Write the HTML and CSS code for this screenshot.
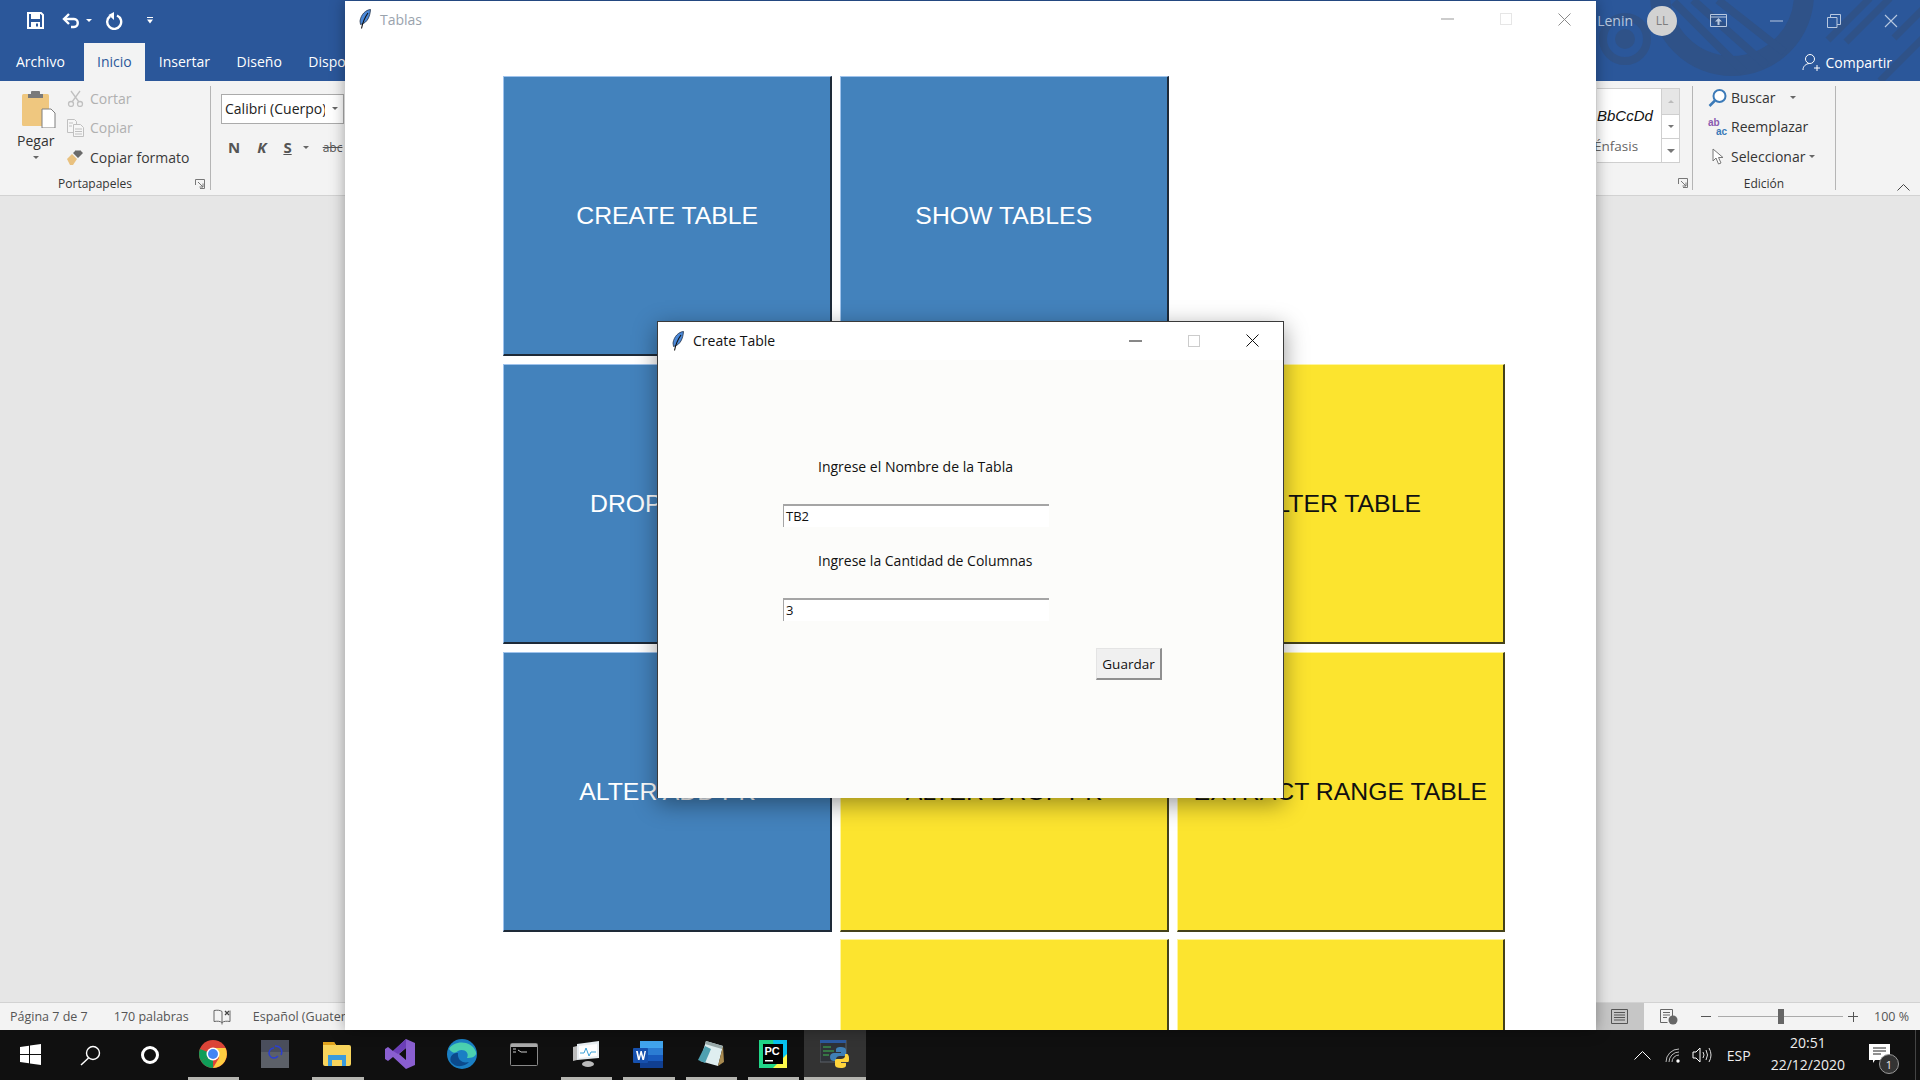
FILE: index.html
```html
<!DOCTYPE html>
<html lang="es">
<head>
<meta charset="utf-8">
<title>Tablas</title>
<link rel="stylesheet" href="styles.css">
</head>
<body>
<svg class="defs" width="0" height="0" aria-hidden="true">
  <symbol id="feather" viewBox="0 0 12 20">
    <path d="M11.500.5C6.500 1 2 5.500 1 12l.5 3.500L3 15C8 13.500 11 8 11.500.5z" fill="#4a88d8" stroke="#22324a" stroke-width=".8"/>
    <path d="M9 4C6 8 4 12 2.500 19.500" fill="none" stroke="#111" stroke-width="1.100"/>
  </symbol>
</svg>

<div class="word">
  <div class="titlebar">
    <svg class="deco" width="324" height="81" viewBox="0 0 324 81">
      <g fill="none" stroke="#2f5288">
        <circle cx="29" cy="39" r="22" stroke-width="8"/>
        <circle cx="136" cy="-6" r="72" stroke-width="20"/>
      </g>
      <circle cx="29" cy="39" r="10" fill="#2f5288"/>
      <g stroke="#2f5288" stroke-width="8" fill="none">
        <path d="M78 2l70 70M97 0l74 66M122 0l66 52"/>
        <path d="M232 40l42-42M250 42l44-44M298 38l30-30M284 81l44-44" stroke-width="7"/>
      </g>
    </svg>
    <div class="qat">
      <svg class="qat-save" width="17" height="17" viewBox="0 0 17 17"><path d="M1 1h13l2 2v13H1z" fill="none" stroke="#fff" stroke-width="2"/><path d="M4 1h9v6H4zM4 10h9v6H4z" fill="#fff"/><rect x="9" y="11.500" width="2" height="3" fill="#2b579a"/></svg>
      <svg class="qat-undo" width="19" height="18" viewBox="0 0 19 18"><path d="M7 2L2 7l5 5" fill="none" stroke="#fff" stroke-width="2.400"/><path d="M3 7h9c5 0 5 8 0 8H9" fill="none" stroke="#fff" stroke-width="2.400"/></svg>
      <span class="qat-caret"></span>
      <svg class="qat-redo" width="18" height="18" viewBox="0 0 18 18"><path d="M12 3.500A7 7 0 1 1 5 4.300" fill="none" stroke="#fff" stroke-width="2.400"/><path d="M9 0v8L3.500 3z" fill="#fff"/></svg>
      <svg class="qat-more" width="6" height="7" viewBox="0 0 6 7"><path d="M0 0h6v1H0zM0 2.500h6L3 6.500z" fill="#fff"/></svg>
    </div>
    <div class="account">
      <span class="acc-name">Lenin</span>
      <span class="avatar">LL</span>
      <svg class="win-disp" width="17" height="13" viewBox="0 0 17 13"><path d="M.5.500h16v12H.5zM.5 3h16" fill="none" stroke="#b8c8e0"/><path d="M8.500 4L5 7.500h2.500V11h2V7.500H12z" fill="#b8c8e0"/></svg>
      <svg class="win-min" width="14" height="2" viewBox="0 0 14 2"><path d="M0 1h13" stroke="#b8c8e0"/></svg>
      <svg class="win-max" width="14" height="14" viewBox="0 0 14 14"><path d="M.5 3.500h9.500v10H.5zM3.500 3.500v-3h10v10H10" fill="none" stroke="#b8c8e0"/></svg>
      <svg class="win-close" width="14" height="14" viewBox="0 0 14 14"><path d="M1 1l12 12M13 1L1 13" stroke="#b8c8e0" stroke-width="1.100"/></svg>
    </div>
    <div class="tabs">
      <span class="tab tab-first">Archivo</span>
      <span class="tab tab-on">Inicio</span>
      <span class="tab">Insertar</span>
      <span class="tab">Diseño</span>
      <span class="tab">Disposición</span>
      <span class="share">
        <svg width="19" height="19" viewBox="0 0 19 19"><circle cx="8" cy="6" r="4.500" fill="none" stroke="#fff"/><path d="M1 17c0-4 3-6 6-6.500M12 15h6M15 12v6" fill="none" stroke="#fff"/></svg>
        Compartir
      </span>
    </div>
  </div>

  <div class="ribbon">
    <div class="rib-left">
      <div class="group group-clip">
        <div class="clip-main">
          <div class="paste">
            <svg width="34" height="38" viewBox="0 0 34 38"><rect x="0" y="4" width="27" height="32" rx="1.500" fill="#efc77f"/><path d="M9 4V2q0-1 1-1h7q1 0 1 1v2h3v4H6V4z" fill="#7a7a7a"/><path d="M20 19h9l4 4v15H20z" fill="#fff" stroke="#7f7f7f"/></svg>
            <span class="paste-label">Pegar</span>
            <span class="caret"></span>
          </div>
          <div class="clip-rows">
            <div class="clip-row off">
              <svg width="17" height="17" viewBox="0 0 17 17"><g fill="none" stroke="#c0c0c0" stroke-width="1.300"><circle cx="4" cy="14" r="2.500"/><circle cx="13" cy="14" r="2.500"/><path d="M5 12L13 1M12 12L4 1"/></g></svg>
              <span>Cortar</span>
            </div>
            <div class="clip-row off">
              <svg width="17" height="18" viewBox="0 0 17 18"><g fill="#f6f6f6" stroke="#c0c0c0"><path d="M.5.500h7l2 2v11h-9z"/><path d="M6.500 5.500h7l3 3v9h-10z"/></g><path d="M2 4h4M2 7h3M8 10h7M8 12.500h7M8 15h7" stroke="#c0c0c0"/></svg>
              <span>Copiar</span>
            </div>
            <div class="clip-row">
              <svg width="17" height="16" viewBox="0 0 17 16"><path d="M0 10l5-5 5 5-4 6H3z" fill="#e9c17f"/><path d="M6 4l3-3 1 1 1-1 1 1 1-1 3 3-5 5z" fill="#6a6a6a"/></svg>
              <span>Copiar formato</span>
            </div>
          </div>
        </div>
        <div class="group-name">Portapapeles<svg class="launcher" width="10" height="10" viewBox="0 0 10 10"><path d="M.5 6V.500H9.500v9H5M3 3l5 5M8 4.500V8H4.500" fill="none" stroke="#777"/></svg></div>
      </div>
      <div class="group group-font">
        <div class="combo"><span class="combo-text">Calibri (Cuerpo)</span><span class="caret"></span></div>
        <div class="fmt">
          <b class="fmt-n">N</b><b class="fmt-k">K</b><b class="fmt-s">S</b><span class="caret"></span><span class="fmt-abc">abc</span>
        </div>
      </div>
    </div>
    <div class="rib-right">
      <div class="group group-style">
        <div class="gallery">
          <div class="gal-item"><span class="gal-sample">BbCcDd</span><span class="gal-name">Énfasis</span></div>
          <div class="gal-scroll">
            <span class="gal-btn gal-dis"><i class="up"></i></span>
            <span class="gal-btn"><i class="down"></i></span>
            <span class="gal-btn"><i class="more"></i></span>
          </div>
        </div>
        <svg class="launcher launcher-style" width="10" height="10" viewBox="0 0 10 10"><path d="M.5 6V.500H9.500v9H5M3 3l5 5M8 4.500V8H4.500" fill="none" stroke="#777"/></svg>
      </div>
      <div class="group group-edit">
        <div class="edit-rows">
          <div class="edit-row">
            <svg width="19" height="18" viewBox="0 0 19 18"><circle cx="11.500" cy="7" r="6" fill="#fff" stroke="#3b7ab8" stroke-width="2"/><path d="M7 11.500L1.500 17" stroke="#3b7ab8" stroke-width="2.500"/></svg>
            <span>Buscar</span><span class="caret caret-gap"></span>
          </div>
          <div class="edit-row">
            <span class="abac"><em class="ab">ab</em><em class="ac">ac</em></span>
            <span>Reemplazar</span>
          </div>
          <div class="edit-row">
            <svg class="cursor" width="12" height="17" viewBox="0 0 12 17"><path d="M1 1v12l3-3 2.500 6 2.500-1-2.500-5.500H11z" fill="#fff" stroke="#777"/></svg>
            <span>Seleccionar</span><span class="caret"></span>
          </div>
        </div>
        <div class="group-name">Edición</div>
      </div>
      <div class="collapse">
        <svg width="13" height="7" viewBox="0 0 13 7"><path d="M.5 6.500l6-6 6 6" fill="none" stroke="#444"/></svg>
      </div>
    </div>
  </div>

  <div class="doc"></div>

  <div class="status">
    <div class="st-left">
      <span class="st-page">Página 7 de 7</span>
      <span class="st-words">170 palabras</span>
      <svg class="st-book" width="18" height="16" viewBox="0 0 18 16"><path d="M9 2.500C7 1 4 1 1 1.500v11c3-.5 6-.5 8 1 2-1.500 5-1.500 8-1v-11M9 2.500v13" fill="none" stroke="#666"/><path d="M12 2l4 4M16 2l-4 4" stroke="#444" stroke-width="1.300"/></svg>
      <span>Español (Guatemala)</span>
    </div>
    <div class="st-right">
      <span class="view view-on"><svg width="17" height="15" viewBox="0 0 17 15"><path d="M.5.500h16v14H.5zM3 3.500h11M3 6h11M3 8.500h11M3 11h11" fill="none" stroke="#555"/></svg></span>
      <span class="view"><svg width="18" height="16" viewBox="0 0 18 16"><path d="M.5.500h12v10M.5.500v13h7M3 3.500h7M3 6h7M3 8.500h4" fill="none" stroke="#666"/><circle cx="13" cy="11" r="4.500" fill="#666"/></svg></span>
      <span class="zoom-minus"></span>
      <span class="slider"><span class="thumb"></span></span>
      <span class="zoom-plus"></span>
      <span class="zoom-val">100 %</span>
    </div>
  </div>
</div>

<div class="taskbar">
  <div class="tb-sys">
    <svg width="21" height="21" viewBox="0 0 21 21"><path d="M0 3l9-1.300V10H0zM10 1.500L21 0v10H10zM0 11h9v8.300L0 18zM10 11h11v10L10 19.500z" fill="#fff"/></svg>
  </div>
  <div class="tb-sys">
    <svg width="21" height="21" viewBox="0 0 21 21"><circle cx="13" cy="8" r="6.500" fill="none" stroke="#fff" stroke-width="1.400"/><path d="M8.500 13L1 20" stroke="#fff" stroke-width="1.500"/></svg>
  </div>
  <div class="tb-sys"><span class="cortana"></span></div>
  <div class="tb-app run">
    <svg width="28" height="28" viewBox="0 0 28 28"><circle cx="14" cy="14" r="14" fill="#db4437"/><path d="M14 14L2 21A14 14 0 0 0 14 28z" fill="#0f9d58"/><path d="M14 14L2 21A14 14 0 0 1 1 9z" fill="#0f9d58"/><path d="M14 8h12.500A14 14 0 0 1 14 28l6-10z" fill="#ffcd40"/><circle cx="14" cy="14" r="6.500" fill="#fff"/><circle cx="14" cy="14" r="5" fill="#4285f4"/></svg>
  </div>
  <div class="tb-app">
    <svg width="28" height="28" viewBox="0 0 28 28"><rect width="28" height="28" fill="#4a4e5c"/><rect y="12" width="28" height="16" fill="#5c6068"/><path d="M13 8a5 5 0 1 0 4 8M14 6c6 0 8 5 6 9" fill="none" stroke="#2b3fd0" stroke-width="1.500"/></svg>
  </div>
  <div class="tb-app run">
    <svg width="28" height="24" viewBox="0 0 28 24"><path d="M0 2q0-2 2-2h9l2 3h13q2 0 2 2v17q0 2-2 2H2q-2 0-2-2z" fill="#f7d45c"/><path d="M0 0h11l2 3H0z" fill="#e0a31d"/><path d="M5 13h18v11h-4v-6h-10v6H5z" fill="#3a9bdc"/><rect x="9" y="20" width="10" height="3" fill="#f7d45c"/></svg>
  </div>
  <div class="tb-app">
    <svg width="30" height="30" viewBox="0 0 30 30"><path d="M21 0l9 4v22l-9 4-13-12-5 4-3-2V10l3-2 5 4zM21 9l-7 6 7 6z" fill="#8a5fd0"/><path d="M21 0l-13 12 5 3 8-6z" fill="#6c3fb8"/></svg>
  </div>
  <div class="tb-app">
    <svg width="30" height="30" viewBox="0 0 30 30"><circle cx="15" cy="15" r="15" fill="#1a7fc4"/><path d="M2 10C6 2 24 0 29 13c1 5-5 6-9 6 3-6-4-10-9-7-3 2-5 3-9-2z" fill="#4bd0b0"/><path d="M11 14c-1 6 4 11 11 9-4 5-14 6-18 0-2-4 1-10 7-9z" fill="#0b4a8c"/></svg>
  </div>
  <div class="tb-app">
    <svg width="28" height="23" viewBox="0 0 28 23"><rect x=".5" y=".5" width="27" height="22" rx="1" fill="#050505" stroke="#888"/><rect x="1" y="1" width="26" height="3" fill="#aaa"/><path d="M3 6h3M3 9h3M8 7l3 2h6" stroke="#ccc"/></svg>
  </div>
  <div class="tb-app run">
    <svg width="28" height="28" viewBox="0 0 28 28"><path d="M5 4l22-3v17L5 20z" fill="#e8eef2"/><path d="M7 6l18-2v12L7 18z" fill="#fff"/><path d="M8 13l4 0 2-5 3 8 2-4h5" fill="none" stroke="#3aa0d8"/><path d="M1 7l4-1v14l-4 1z" fill="#bbb"/><ellipse cx="16" cy="24" rx="6" ry="3" fill="#bbb"/></svg>
  </div>
  <div class="tb-app run">
    <svg width="30" height="27" viewBox="0 0 30 27"><rect x="7" width="23" height="27" rx="1" fill="#185abd"/><rect x="7" width="23" height="7" fill="#41a5ee"/><rect x="7" y="7" width="23" height="7" fill="#2b7cd3"/><rect x="7" y="20" width="23" height="7" fill="#103f91"/><rect y="7" width="15" height="15" rx="1" fill="#1650ad"/><path d="M3 10h1.800l1.200 6 1.500-6h1.300l1.500 6 1.200-6H13l-2 9h-1.600L8 13.500 6.600 19H5z" fill="#fff"/></svg>
  </div>
  <div class="tb-app run">
    <svg width="28" height="28" viewBox="0 0 28 28"><path d="M9 1l17 5-5 20L3 21z" fill="#dfeef0"/><path d="M9 1l17 5-1 3L8 4z" fill="#9aa"/><path d="M8 6l-7 14 7 3 6-14z" fill="#4fa0b0"/><path d="M26 6l1 16-6 4z" fill="#a88a50"/></svg>
  </div>
  <div class="tb-app run">
    <svg width="28" height="28" viewBox="0 0 28 28"><rect width="28" height="28" fill="#21d789"/><path d="M14 0h14v28H18z" fill="#07c3f2"/><path d="M28 14v14H14z" fill="#fcf84a"/><rect x="4" y="4" width="20" height="20" fill="#000"/><rect x="6" y="20" width="8" height="1.500" fill="#fff"/><text class="pc" x="5.500" y="15">PC</text></svg>
  </div>
  <div class="tb-app run active">
    <svg width="29" height="29" viewBox="0 0 29 29"><rect width="26" height="22" fill="#2e3238" stroke="#5a6068"/><rect width="26" height="3" fill="#2c5aa0"/><path d="M3 7h8M3 11h11M3 15h6" stroke="#3fb950"/><path d="M21 7c-4 0-5 1-5 3v2h5v1h-7c-2 0-4 1-4 4s2 4 4 4h2v-2c0-2 2-3 4-3h4c2 0 2-1 2-2v-4c0-2-2-3-5-3z" fill="#3f7fb5"/><path d="M21 28c4 0 5-1 5-3v-2h-5v-1h7c1 0 1-2 1-4s-1-4-2-4h-2v2c0 2-2 3-4 3h-4c-2 0-2 1-2 2v4c0 2 2 3 6 3z" fill="#ffd43b"/></svg>
  </div>
  <div class="tb-tray">
    <svg class="tray-chev" width="17" height="9" viewBox="0 0 17 9"><path d="M.5 8.500l8-8 8 8" fill="none" stroke="#fff"/></svg>
    <svg class="tray-wifi" width="16" height="15" viewBox="0 0 16 15"><g fill="none" stroke="#bbb"><path d="M1 14A13 13 0 0 1 14 1M4 14A10 10 0 0 1 14 4M7 14A7 7 0 0 1 14 7"/></g><circle cx="13" cy="13" r="1.700" fill="#fff"/></svg>
    <svg class="tray-vol" width="20" height="16" viewBox="0 0 20 16"><path d="M1 5h3l4-4v14l-4-4H1z" fill="none" stroke="#fff"/><path d="M11 5q2 3 0 6M14 3q3 5 0 10M17 1q4 7 0 14" fill="none" stroke="#ddd"/></svg>
    <span class="lang">ESP</span>
    <span class="clock"><span>20:51</span><span>22/12/2020</span></span>
    <span class="notif">
      <svg width="21" height="19" viewBox="0 0 21 19"><path d="M0 0h21v16H6l-2 3v-3H0z" fill="#fff"/><path d="M4 4h13M4 7h13M4 10h8" stroke="#222"/></svg>
      <span class="badge">1</span>
    </span>
    <span class="show-desk"></span>
  </div>
</div>

<section class="window main-win">
  <header class="win-title">
    <svg class="feather" width="12" height="20"><use href="#feather"/></svg>
    <span class="win-name">Tablas</span>
    <span class="win-ctl">
      <svg width="13" height="2" viewBox="0 0 13 2"><path d="M0 1h13" stroke="#999"/></svg>
      <svg width="12" height="12" viewBox="0 0 12 12"><rect x=".5" y=".5" width="11" height="11" fill="none" stroke="#e6e6e6"/></svg>
      <svg width="13" height="13" viewBox="0 0 13 13"><path d="M.5.500l12 12M12.500.500l-12 12" stroke="#8a8a8a"/></svg>
    </span>
  </header>
  <div class="menu-grid">
    <div class="tk blue">CREATE TABLE</div>
    <div class="tk blue">SHOW TABLES</div>
    <div class="tk-empty"></div>
    <div class="tk blue">DROP TABLE</div>
    <div class="tk blue"></div>
    <div class="tk yellow">ALTER TABLE</div>
    <div class="tk blue">ALTER ADD PK</div>
    <div class="tk yellow">ALTER DROP PK</div>
    <div class="tk yellow">EXTRACT RANGE TABLE</div>
    <div class="tk-empty"></div>
    <div class="tk yellow"></div>
    <div class="tk yellow"></div>
  </div>
</section>

<section class="window dialog">
  <header class="dlg-title">
    <svg class="feather" width="12" height="20"><use href="#feather"/></svg>
    <span class="dlg-name">Create Table</span>
    <span class="win-ctl dlg-ctl">
      <svg width="13" height="2" viewBox="0 0 13 2"><path d="M0 1h13" stroke="#111"/></svg>
      <svg width="12" height="12" viewBox="0 0 12 12"><rect x=".5" y=".5" width="11" height="11" fill="none" stroke="#ccc"/></svg>
      <svg width="13" height="13" viewBox="0 0 13 13"><path d="M.5.500l12 12M12.500.500l-12 12" stroke="#111"/></svg>
    </span>
  </header>
  <div class="dlg-body">
    <div class="dlg-label">Ingrese el Nombre de la Tabla</div>
    <div class="dlg-entry">TB2</div>
    <div class="dlg-label dlg-label-2">Ingrese la Cantidad de Columnas</div>
    <div class="dlg-entry">3</div>
    <div class="dlg-btn">Guardar</div>
  </div>
</section>
</body>
</html>
```
FILE: styles.css
```css
* { box-sizing: border-box; }
html, body { margin: 0; height: 100%; }
body {
  width: 1920px;
  height: 1080px;
  overflow: hidden;
  position: relative;
  display: flex;
  flex-direction: column;
  font-family: "Open Sans", "Noto Sans", sans-serif;
  font-size: 13px;
  color: #444;
  background: #e6e6e6;
}
.defs { position: absolute; }
.word { flex: 1; display: flex; flex-direction: column; min-height: 0; }

/* Word title bar */
.titlebar {
  height: 81px;
  background: #2b579a;
  position: relative;
  color: #fff;
  flex: none;
  display: grid;
  grid-template-columns: 1fr auto;
  grid-template-rows: 41px 40px;
}
.deco { position: absolute; right: 0; top: 0; }
.qat { display: flex; align-items: center; padding-left: 27px; position: relative; }
.qat-undo { margin-left: 18px; }
.qat-caret { width: 0; height: 0; border: 3px solid transparent; border-top: 3px solid #fff; border-bottom: 0; margin-left: 5px; }
.qat-redo { margin-left: 13px; }
.qat-more { margin-left: 24px; }
.account { display: flex; align-items: center; position: relative; padding-right: 22px; }
.acc-name { color: #b8c8e0; font-size: 14px; margin-right: 14px; }
.avatar {
  width: 30px; height: 30px; border-radius: 50%;
  background: #d2d2d2; color: #7d7d7d;
  display: flex; align-items: center; justify-content: center;
  font-size: 12px; margin-right: 33px;
}
.win-min { margin-left: 43px; }
.win-max { margin-left: 43px; }
.win-close { margin-left: 43px; }
.tabs { grid-column: 1 / -1; display: flex; align-items: stretch; position: relative; padding-top: 2px; }
.tab { padding: 0 12.500px 2px 14px; display: flex; align-items: center; font-size: 14px; }
.tab-first { padding: 0 19px 2px 16px; }
.tab-on { background: #f3f3f3; color: #2b579a; width: 61px; padding: 0 0 2px; justify-content: center; }
.share { margin-left: auto; padding-right: 28px; display: flex; align-items: center; gap: 4px; font-size: 14px; }

/* Ribbon */
.ribbon {
  height: 115px;
  flex: none;
  background: #f3f3f3;
  border-bottom: 1px solid #d2d2d2;
  display: flex;
  justify-content: space-between;
}
.rib-left, .rib-right { display: flex; }
.group { position: relative; margin-top: 5px; height: 104px; }
.group-clip { width: 211px; border-right: 1px solid #b5b5b5; display: flex; flex-direction: column; }
.clip-main { display: flex; flex: none; height: 87px; }
.paste { width: 70px; padding: 4px 0 0 22px; display: flex; flex-direction: column; }
.paste-label { font-size: 14px; margin: 3px 0 0 -5px; line-height: 20px; color: #333; }
.caret {
  display: inline-block; width: 0; height: 0; flex: none;
  border: 3px solid transparent; border-top: 3px solid #666; border-bottom: 0;
}
.paste .caret { margin: 5px 0 0 11px; }
.clip-rows { display: flex; flex-direction: column; margin-top: -2px; }
.clip-row { display: flex; align-items: center; flex: none; height: 29.300px; margin-left: -3px; gap: 6px; color: #3a3a3a; font-size: 14px; white-space: nowrap; }
.clip-row.off { color: #b0b0b0; }
.group-name { flex: none; height: 22px; text-align: center; font-size: 12px; line-height: 22px; color: #333; padding-right: 20px; position: relative; }
.launcher { position: absolute; right: 5px; top: 6px; }
.group-font { width: 150px; padding: 8px 0 0 10px; }
.combo {
  width: 123px; height: 30px; border: 1px solid #ababab; background: #fff;
  display: flex; align-items: center; gap: 7px; padding: 0 0 2px 3px;
  font-size: 14px; color: #222; white-space: nowrap;
}
.combo-text { width: 100px; overflow: hidden; flex: none; }
.fmt { display: flex; align-items: center; height: 38px; margin-top: 4px; font-size: 15px; color: #555; }
.fmt-n { margin-left: 7px; }
.fmt-k { margin-left: 17px; font-style: italic; }
.fmt-s { margin-left: 17px; text-decoration: underline; }
.fmt .caret { margin-left: 11px; }
.fmt-abc { margin-left: 14px; font-size: 12px; text-decoration: line-through; }

.rib-right { width: 323px; }
.group-style { width: 96px; border-right: 1px solid #b5b5b5; }
.gallery { display: flex; width: 83px; height: 75px; margin-top: 2px; border: 1px solid #cfcfcf; border-left: 0; background: #fff; }
.gal-item { flex: 1; min-width: 0; display: flex; flex-direction: column; }
.gal-sample { font-family: "Liberation Sans", sans-serif; font-style: italic; font-size: 15px; color: #111; margin-top: 17px; line-height: 20px; white-space: nowrap; }
.gal-name { font-size: 13.500px; color: #666; margin-top: 10px; line-height: 20px; margin-left: -3px; }
.gal-scroll { width: 18px; flex: none; display: flex; flex-direction: column; border-left: 1px solid #cfcfcf; }
.gal-btn { flex: 1; display: flex; align-items: center; justify-content: center; border-bottom: 1px solid #cfcfcf; }
.gal-btn:last-child { border-bottom: 0; }
.gal-dis { background: #e6e6e6; flex: 1.100; }
.gal-btn i { width: 0; height: 0; border: 3px solid transparent; }
.gal-btn .up { border-bottom: 3px solid #bbb; border-top: 0; }
.gal-btn .down { border-top: 3px solid #777; border-bottom: 0; }
.gal-btn .more { border: 4px solid transparent; border-top: 4px solid #777; border-bottom: 0; box-shadow: 0 -3px 0 -2px #777; }
.launcher-style { right: 4px; top: 92px; }
.group-edit { width: 143px; border-right: 1px solid #b5b5b5; display: flex; flex-direction: column; }
.edit-rows { flex: none; height: 90px; margin-top: -3px; padding: 0 0 0 15px; }
.edit-row { display: flex; align-items: center; height: 29.300px; gap: 4px; color: #333; font-size: 14px; white-space: nowrap; }
.caret-gap { margin-left: 10px; }
.abac { width: 19px; display: flex; flex-direction: column; font-size: 10px; line-height: 9px; font-weight: 600; font-family: "Liberation Sans", sans-serif; }
.abac em { font-style: normal; }
.ab { color: #8a5ab0; }
.ac { color: #3b7ab8; text-align: right; }
.cursor { margin: 0 3px 0 4px; }
.group-edit .group-name { padding-right: 0; }
.collapse { flex: 1; display: flex; align-items: flex-end; justify-content: flex-end; padding: 0 10px 4px 0; }

.doc { flex: 1; background: #e6e6e6; }
.status {
  height: 28px;
  flex: none;
  background: #f3f3f3;
  border-top: 1px solid #d2d2d2;
  display: flex;
  justify-content: space-between;
  font-size: 12.500px;
  color: #555;
}
.st-left { display: flex; align-items: center; padding-left: 10px; white-space: nowrap; }
.st-page { margin-right: 26px; }
.st-words { margin-right: 24px; }
.st-book { margin-right: 22px; }
.st-right { display: flex; align-items: center; width: 325px; }
.view { width: 49px; height: 100%; display: flex; align-items: center; justify-content: center; }
.view-on { background: #c6c6c6; }
.zoom-minus { width: 10px; height: 1px; background: #555; margin-left: 8px; }
.slider { width: 125px; height: 1px; background: #aaa; margin-left: 7px; position: relative; }
.thumb { position: absolute; left: 60px; top: -7px; width: 6px; height: 15px; background: #666; }
.zoom-plus { width: 10px; height: 10px; margin-left: 5px; background: linear-gradient(#555,#555) center/100% 1px no-repeat, linear-gradient(#555,#555) center/1px 100% no-repeat; }
.zoom-val { margin-left: 16px; }

/* Taskbar */
.taskbar { height: 50px; flex: none; background: #101010; display: flex; align-items: center; color: #fff; }
.tb-sys { width: 60px; height: 100%; display: flex; align-items: center; justify-content: center; }
.tb-sys:first-child { padding-bottom: 1px; }
.tb-sys + .tb-sys + .tb-sys + .tb-app { margin-left: 2px; }
.cortana { width: 18px; height: 18px; border: 3px solid #fff; border-radius: 50%; }
.tb-app { width: 62.200px; height: 100%; display: flex; align-items: center; justify-content: center; position: relative; padding-bottom: 2px; flex: none; }
.run::after { content: ""; position: absolute; left: 6px; right: 5px; bottom: 0; height: 3px; background: #b5b5b0; }
.active { background: #333; }
.active::after { left: 0; right: 0; }
.pc { font: 700 11px "Liberation Sans", sans-serif; fill: #fff; }
.tb-tray { margin-left: auto; display: flex; align-items: center; height: 100%; color: #eee; }
.tray-chev { margin-right: 14px; }
.tray-wifi { margin-right: 11px; }
.tray-vol { margin-right: 15px; }
.lang { font-size: 14px; }
.clock { display: flex; flex-direction: column; align-items: center; font-size: 14px; line-height: 22px; margin: -2px 0 0 20px; }
.notif { position: relative; width: 55px; height: 100%; margin-left: 15px; display: flex; align-items: center; padding-left: 9px; padding-bottom: 3px; }
.badge {
  position: absolute; left: 19px; top: 24px; width: 20px; height: 20px;
  border-radius: 50%; background: #333; border: 1px solid #999;
  font-size: 11px; display: flex; align-items: center; justify-content: center;
}
.show-desk { width: 5px; height: 100%; border-left: 1px solid #444; }

/* Windows on the desktop */
.window { position: absolute; }
.main-win {
  left: 345px; top: 1px; width: 1251px; height: 1029px;
  background: #fff;
  box-shadow: 0 0 14px rgba(0,0,0,.35);
  overflow: hidden;
}
.win-title { height: 36px; display: flex; align-items: center; padding-left: 14px; }
.feather { flex: none; }
.win-name { margin-left: 9px; color: #9aa3ad; font-size: 14px; }
.win-ctl { margin-left: auto; display: flex; align-items: center; gap: 46px; padding-right: 25px; }
.menu-grid {
  display: grid;
  grid-template-columns: repeat(3, 328.600px);
  grid-auto-rows: 280px;
  gap: 7.670px 8px;
  padding: 39.400px 0 0 158.400px;
}
.tk {
  display: flex; align-items: center; justify-content: center;
  font-family: "Liberation Sans", Arial, sans-serif;
  font-size: 24.800px;
  white-space: nowrap;
  padding-top: 1px;
  border-style: solid;
  border-width: 1px 2px 2px 1px;
}
.blue { background: #4382bc; color: #fff; border-color: #9fc3ec #1e2a38 #1e2a38 #9fc3ec; }
.yellow { background: #fce42f; color: #111; border-color: #fff6a0 #45421a #45421a #fff6a0; }

.dialog {
  left: 657px; top: 321px; width: 627px; height: 477px;
  background: #fcfcfa;
  border: 1px solid #3a3a3a;
  border-bottom: 0;
  box-shadow: 0 6px 22px rgba(0,0,0,.4);
}
.dlg-title { height: 38px; background: #fff; display: flex; align-items: center; padding: 0 0 1px 14px; }
.dlg-name { margin-left: 9px; color: #111; font-size: 14px; }
.dlg-ctl { padding-right: 24px; gap: 46px; }
.dlg-body { padding: 97px 0 0 125px; }
.dlg-label { height: 20px; line-height: 20px; margin-left: 35px; font-size: 14px; color: #111; white-space: nowrap; }
.dlg-label-2 { margin-top: 24px; }
.dlg-entry {
  width: 266px; height: 23px; margin-top: 27px;
  background: #fff;
  border-top: 2px solid #a5a5a5;
  border-left: 1px solid #a5a5a5;
  padding-left: 2px;
  font-size: 13px; line-height: 20px; color: #111;
}
.dlg-btn {
  width: 66px; height: 32px; margin: 27px 0 0 313px;
  background: #f0f0f0;
  border: 1px solid #e4e4e4;
  border-right: 2px solid #8f8f8f;
  border-bottom: 2px solid #8f8f8f;
  display: flex; align-items: center; justify-content: center;
  font-size: 13.500px; color: #111;
}
```
